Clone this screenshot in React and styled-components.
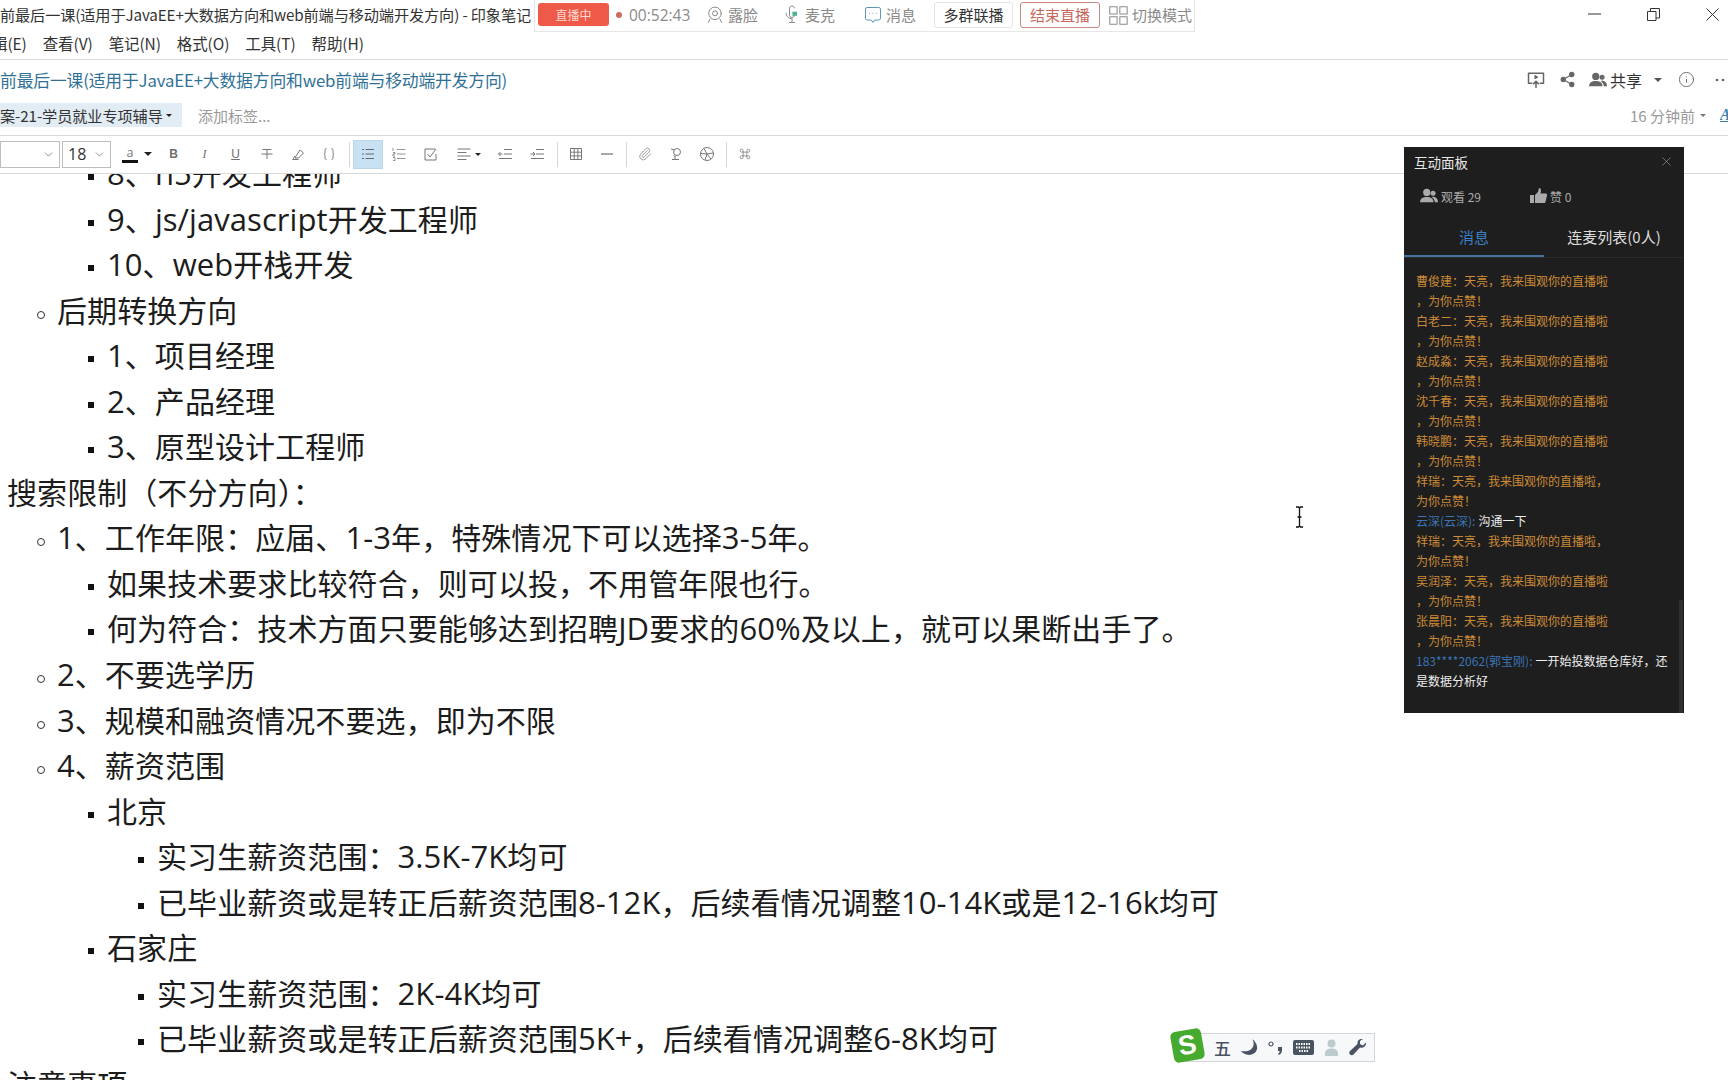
import React from 'react';
import styled, { createGlobalStyle } from 'styled-components';
import { Info, Share2, ChevronDown, X, Paperclip } from 'lucide-react';

const CJK = '"Noto Sans CJK SC", "Noto Sans", sans-serif';
const Global = createGlobalStyle`
  html, body { margin: 0; padding: 0; background: #fff; overflow: hidden; }
  body { font-family: ${CJK}; color: #222; }
`;

const Page = styled.div`
  position: relative; width: 1728px; height: 1080px; overflow: hidden; display: flex; flex-direction: column; background: #fff;
`;
const TitleBar = styled.div`display: flex; align-items: flex-start; height: 30px; white-space: nowrap; flex: none;`;
const WinTitle = styled.div`font-size: 15.2px; line-height: 29px; color: #333; width: 534px; flex: none; letter-spacing: -0.13px; overflow: hidden;`;
const LiveBar = styled.div`
  flex: none; width: 661px; height: 32px; box-sizing: border-box; border: 1px solid #e6e6e6; border-top: 0; background: #fff;
  display: flex; align-items: center; padding: 0 0 2px 3px; font-size: 15px; color: #8a8a8a; position: relative; z-index: 2;
`;
const LiveBadge = styled.div`width: 71px; height: 23px; border-radius: 3px; background: #ee5a47; color: #ffd9d2; font-size: 12px; display: flex; align-items: center; justify-content: center;`;
const Dot = styled.span`width: 6px; height: 6px; border-radius: 50%; background: #cf6a62; margin: 0 7px 0 7px;`;
const Time = styled.span`font-family: "Open Sans", sans-serif; font-size: 15.5px; width: 68px; color: #8a8a8a;`;
const LiveItem = styled.span`display: flex; align-items: center; gap: 3px; margin-left: ${p => p.$ml}px;`;
const LiveBtn = styled.div`
  height: 26px; width: ${p => p.$w}px; box-sizing: border-box; border-radius: 3px; border: 1px solid ${p => p.$danger ? '#c98a82' : '#e4e4e4'};
  color: ${p => p.$danger ? '#c8675c' : '#333'}; display: flex; align-items: center; justify-content: center; margin-left: ${p => p.$ml}px; font-size: 15px;
`;
const WinControls = styled.div`margin-left: auto; display: flex; align-items: center; height: 28px; color: #333;`;
const WinBtn = styled.span`width: 58px; display: flex; justify-content: center; &:last-child { width: 32px; margin-left: 14px; }`;

const MenuBar = styled.div`
  height: 30px; display: flex; gap: 16px; align-items: center; padding-bottom: 3px; box-sizing: border-box; border-bottom: 1px solid #d8d8d8; font-size: 15.5px; letter-spacing: -0.1px; color: #333; overflow: hidden; flex: none;
`;
const MenuFirst = styled.span`margin-left: -8px;`;

const NoteHead = styled.div`height: 41px; box-sizing: border-box; padding-bottom: 2px; flex: none; display: flex; align-items: center; font-size: 16.8px; color: #2f7196; white-space: nowrap; letter-spacing: -0.15px;`;
const HeadTools = styled.div`margin-left: auto; display: flex; align-items: center; color: #666; font-size: 16px; letter-spacing: 0; padding-right: 2px;`;
const HeadTool = styled.span`display: flex; align-items: center; gap: 3px; margin-left: ${p => p.$ml || 0}px; color: ${p => p.$dark ? '#333' : '#666'};`;
const Caret = styled.span`
  display: inline-block; width: 0; height: 0; border-left: ${p => p.$s || 4}px solid transparent; border-right: ${p => p.$s || 4}px solid transparent;
  border-top: ${p => p.$s || 4}px solid ${p => p.$c || '#555'}; margin-left: ${p => p.$ml || 0}px;
`;
const TagRow = styled.div`height: 35px; flex: none; box-sizing: border-box; padding-bottom: 6px; display: flex; align-items: center; border-bottom: 1px solid #d8d8d8; font-size: 15px; white-space: nowrap;`;
const TagChip = styled.div`height: 24px; width: 182px; background: #e2ecf4; display: flex; align-items: center; color: #333; font-size: 15.2px; gap: 3px; letter-spacing: -0.1px;`;
const TagHint = styled.div`margin-left: 16px; color: #999;`;
const Updated = styled.div`margin-left: auto; display: flex; align-items: center; color: #999; font-size: 15px;`;
const FontA = styled.span`margin-left: 14px; width: 8px; overflow: hidden; color: #3f7fb0; font-style: italic; font-weight: 700; font-family: "Liberation Serif", serif; text-decoration: underline; font-size: 16px;`;

const ToolBar = styled.div`height: 38px; box-sizing: border-box; padding-bottom: 1px; display: flex; align-items: center; border-bottom: 1px solid #d8d8d8; color: #777; flex: none;`;
const Select = styled.div`
  box-sizing: border-box; height: 27px; width: ${p => p.$w}px; border: 1px solid #bdbdbd; margin-left: ${p => p.$ml || 0}px;
  display: flex; align-items: center; justify-content: space-between; padding: 0 4px 0 5px; font-size: 16px; color: #333; font-family: "Open Sans", sans-serif;
`;
const ColorBtn = styled.div`width: 47px; height: 30px; display: flex; align-items: center; padding-left: 11px; box-sizing: border-box; gap: 6px;`;
const ColorA = styled.span`font-size: 12.5px; line-height: 15px; color: #777; border-bottom: 3px solid #111; width: 16px; text-align: center; font-family: "Open Sans", sans-serif;`;
const Tool = styled.span`
  width: ${p => p.$w || 31}px; height: 29px; flex: none; display: flex; align-items: center; justify-content: center; box-sizing: border-box;
  color: #777; background: ${p => p.$active ? '#c9e2f3' : 'transparent'};
  box-shadow: ${p => p.$active ? 'inset 0 0 0 1px #bcd6ea' : 'none'};
`;
const Letter = styled.span`
  font: ${p => p.$i ? 'italic' : 'normal'} ${p => p.$b ? 700 : 400} 12px ${p => p.$i ? '"Liberation Serif", serif' : '"Liberation Sans", sans-serif'};
  color: #6f6f6f; text-decoration: ${p => p.$u ? 'underline' : 'none'};
`;
const Sep = styled.span`width: 1px; height: 25px; background: #d6d6d6; flex: none; margin: 0 ${p => p.$r || 3}px 0 ${p => p.$l || 5}px;`;

const Content = styled.div`flex: 1; min-height: 0; overflow: hidden;`;
const Lines = styled.div`margin-top: -24px;`;
const Line = styled.div`
  position: relative; height: 45.55px; line-height: 45.55px; white-space: nowrap; color: #1c1c1c; font-size: 30px; letter-spacing: 0.07px;
  font-family: ${CJK};
  padding-left: ${p => [7, 57, 107, 157][p.$level]}px;
  ${p => p.$level >= 2 && `&::before { content: ''; position: absolute; left: ${p.$level === 2 ? 88 : 138}px; top: 24px; width: 6px; height: 6px; background: #111; }`}
  ${p => p.$level === 1 && `&::before { content: ''; position: absolute; left: 37px; top: 24px; width: 6px; height: 6px; border: 1px solid #333; border-radius: 50%; }`}
`;
const Latin = styled.span`font-family: "Open Sans", sans-serif; font-size: 31px;`;

const Panel = styled.aside`
  position: absolute; left: 1404px; top: 147px; width: 280px; height: 566px; background: #1e1e1e; color: #ddd; z-index: 3; display: flex; flex-direction: column;
`;
const PanelHead = styled.div`height: 29px; flex: none; display: flex; align-items: center; justify-content: space-between; padding: 0 10px; font-size: 13.5px; color: #e8e8e8;`;
const Stats = styled.div`height: 36px; margin-top: 2px; flex: none; display: flex; align-items: center; padding-left: 16px; font-size: 12px; color: #aaa;`;
const Stat = styled.span`display: flex; align-items: center; gap: 3px; width: ${p => p.$w}px;`;
const Tabs = styled.div`height: 43px; flex: none; display: flex; border-bottom: 1px solid #2b2b2b;`;
const TabItem = styled.div`
  width: 140px; display: flex; align-items: center; justify-content: center; font-size: 15px; box-sizing: border-box; padding-top: 3px;
  color: ${p => p.$on ? '#3e7fc4' : '#dcdcdc'}; border-bottom: 2px solid ${p => p.$on ? '#45729f' : 'transparent'}; height: 43px;
`;
const Msgs = styled.div`padding: 13px 0 0 12px; font-size: 12px; line-height: 20px; white-space: nowrap;`;
const Orange = styled.div`color: #cc8b37;`;
const Blue = styled.span`color: #3b74b4;`;
const White = styled.span`color: #eee; margin-left: 3px;`;
const Thumb = styled.div`position: absolute; right: 1px; bottom: 0; width: 4px; height: 113px; background: #303030;`;

const Ime = styled.div`
  position: absolute; left: 1182px; top: 1033px; width: 193px; height: 29px; background: #f7f8fa; border: 1px solid #d3d6dc; box-sizing: border-box;
  display: flex; align-items: center; padding-left: 31px; gap: 10px; color: #4a5361; z-index: 3;
`;
const ImeLogo = styled.div`
  position: absolute; left: -11px; top: -4px; width: 31px; height: 31px; border-radius: 5px; background: #45aa2e; transform: rotate(-10deg);
  color: #fff; font: 700 27px/30px "Liberation Sans", sans-serif; text-align: center;
`;
const ImeText = styled.span`font-size: 17px; font-weight: 500; line-height: 1; color: #4a5361; width: 17px;`;
const Cursor = styled.div`position: absolute; left: 1295px; top: 506px; color: #111; z-index: 2; line-height: 0;`;

const rows = [
  [2, '8、h5开发工程师'], [2, '9、js/javascript开发工程师'], [2, '10、web开栈开发'],
  [1, '后期转换方向'], [2, '1、项目经理'], [2, '2、产品经理'], [2, '3、原型设计工程师'],
  [0, '搜索限制（不分方向）：'],
  [1, '1、工作年限：应届、1-3年，特殊情况下可以选择3-5年。'],
  [2, '如果技术要求比较符合，则可以投，不用管年限也行。'],
  [2, '何为符合：技术方面只要能够达到招聘JD要求的60%及以上，就可以果断出手了。'],
  [1, '2、不要选学历'], [1, '3、规模和融资情况不要选，即为不限'], [1, '4、薪资范围'],
  [2, '北京'], [3, '实习生薪资范围：3.5K-7K均可'],
  [3, '已毕业薪资或是转正后薪资范围8-12K，后续看情况调整10-14K或是12-16k均可'],
  [2, '石家庄'], [3, '实习生薪资范围：2K-4K均可'],
  [3, '已毕业薪资或是转正后薪资范围5K+，后续看情况调整6-8K均可'],
  [0, '注意事项'],
];
const cheer = n => `${n}：天亮，我来围观你的直播啦`;
const withLatin = text => text.split(/([\x21-\x7e]+)/).map((s, i) => (i % 2 ? <Latin key={i}>{s}</Latin> : s));

const Stroke = ({ size = 18, w = 1.2, children, color = 'currentColor', vb = 24 }) => (
  <svg width={size} height={size} viewBox={`0 0 ${vb} ${vb}`} fill="none" stroke={color} strokeWidth={w} strokeLinecap="round" strokeLinejoin="round">{children}</svg>
);
const Ico = ({ children, size = 16 }) => (
  <svg width={size} height={size} viewBox="0 0 16 16" fill="none" stroke="#777" strokeWidth="1">{children}</svg>
);
const People = ({ size = 18, color = '#777' }) => (
  <svg width={size} height={size} viewBox="0 0 20 20" fill={color}>
    <circle cx="7.5" cy="6" r="4" /><path d="M0 17c0-4 3-6 7.500-6S15 13 15 17z" />
    <circle cx="14.500" cy="7" r="2.800" /><path d="M13 11c3.500-.5 7 1 7 6h-3.500c0-2-1.500-4.500-3.500-6z" />
  </svg>
);

export default function App() {
  return (
    <Page>
      <Global />
      <TitleBar>
        <WinTitle>前最后一课(适用于JavaEE+大数据方向和web前端与移动端开发方向) - 印象笔记</WinTitle>
        <LiveBar>
          <LiveBadge>直播中</LiveBadge>
          <Dot />
          <Time>00:52:43</Time>
          <LiveItem $ml={8}>
            <Stroke size={20}><circle cx="12" cy="10" r="7.500" /><circle cx="12" cy="10" r="3" /><path d="M6 17l-2 4M18 17l2 4" /></Stroke>
            露脸
          </LiveItem>
          <LiveItem $ml={24}>
            <Stroke size={20}><path d="M15 3.500A3 3 0 0 0 9 5v7a3 3 0 0 0 6 0" /><path d="M5 10c0 4 3 6.500 7 6.500M12 17v4M9 21h6" /><path d="M12.500 8h5.500v5h-5.500z" fill="#4fb58a" stroke="none" /></Stroke>
            麦克
          </LiveItem>
          <LiveItem $ml={28}>
            <Stroke size={20} color="#5f98b4"><path d="M5 3h14a2 2 0 0 1 2 2v11a2 2 0 0 1-2 2h-5l-2 3-2-3H5a2 2 0 0 1-2-2V5a2 2 0 0 1 2-2z" /><path d="M8 10h.01M12 10h.01M16 10h.01" /></Stroke>
            消息
          </LiveItem>
          <LiveBtn $w={79} $ml={18}>多群联播</LiveBtn>
          <LiveBtn $w={80} $ml={7} $danger>结束直播</LiveBtn>
          <LiveItem $ml={7}>
            <Stroke size={22} w={1.1}><rect x="3" y="3" width="8" height="8" /><rect x="14" y="3" width="8" height="8" /><rect x="3" y="14" width="8" height="8" /><rect x="14" y="14" width="8" height="8" /></Stroke>
            切换模式
          </LiveItem>
        </LiveBar>
        <WinControls>
          <WinBtn><svg width="14" height="2"><path d="M0 1h13" stroke="#333" /></svg></WinBtn>
          <WinBtn><svg width="13" height="13" fill="none" stroke="#333"><path d="M.5 3.500h8.500v9H.5zM3.500 3V.5H12.500V10H9" /></svg></WinBtn>
          <WinBtn><svg width="13" height="13" stroke="#333"><path d="M.5.5l12 12M12.500.5l-12 12" /></svg></WinBtn>
        </WinControls>
      </TitleBar>

      <MenuBar>
        <MenuFirst>辑(E)</MenuFirst>
        <span>查看(V)</span><span>笔记(N)</span><span>格式(O)</span><span>工具(T)</span><span>帮助(H)</span>
      </MenuBar>

      <NoteHead>
        前最后一课(适用于JavaEE+大数据方向和web前端与移动端开发方向)
        <HeadTools>
          <HeadTool>
            <Stroke size={20} w={1.8}><path d="M7 16H3V4h18v12h-4" /><path d="M12 21v-7M9 16.500l3-3 3 3" fill="#666" /><path d="M11 7l2.500 1.500L11 10z" /></Stroke>
          </HeadTool>
          <HeadTool $ml={13}><Share2 size={17} fill="#666" strokeWidth={1.6} /></HeadTool>
          <HeadTool $ml={13} $dark><People size={18} color="#666" />共享<Caret $ml={9} $s={4} /></HeadTool>
          <HeadTool $ml={16}><Info size={17} strokeWidth={1.3} /></HeadTool>
          <HeadTool $ml={20}>
            <svg width="11" height="4" fill="#666"><circle cx="2" cy="2" r="1.300" /><circle cx="8" cy="2" r="1.300" /></svg>
          </HeadTool>
        </HeadTools>
      </NoteHead>

      <TagRow>
        <TagChip>案-21-学员就业专项辅导<Caret $s={3} $c="#222" /></TagChip>
        <TagHint>添加标签...</TagHint>
        <Updated>
          <span>16 分钟前</span><Caret $ml={5} $s={3} $c="#777" /><FontA>A</FontA>
        </Updated>
      </TagRow>

      <ToolBar>
        <Select $w={60}><span /><ChevronDown size={13} strokeWidth={1} /></Select>
        <Select $w={49} $ml={2}>18<ChevronDown size={13} strokeWidth={1} /></Select>
        <ColorBtn><ColorA>a</ColorA><Caret $s={4} $c="#222" /></ColorBtn>
        <Tool><Letter $b>B</Letter></Tool>
        <Tool><Letter $i>I</Letter></Tool>
        <Tool><Letter $u>U</Letter></Tool>
        <Tool><Ico><path d="M3.500 3.500h9M8 3.500V13M2.500 8h11" /></Ico></Tool>
        <Tool><Ico><path d="M6 10l4-6 3.500 3-5 5H5zM2.500 13.500h6M5 10l-2 3" /></Ico></Tool>
        <Tool><Ico><path d="M5.500 2.500C4 2.500 4 3.500 4 5.500S3.500 8 3 8c.5 0 1 .5 1 2.500s0 3 1.500 3M10.500 2.500c1.500 0 1.500 1 1.500 3s.5 2.500 1 2.500c-.5 0-1 .5-1 2.500s0 3-1.500 3" /></Ico></Tool>
        <Sep $l={5} $r={3} />
        <Tool $w={30} $active><Ico><path d="M5.500 3.500h8.500M5.500 8h8.500M5.500 12.500h8.500M2 3.500h2M2 8h2M2 12.500h2" stroke="#667" /></Ico></Tool>
        <Tool $w={31}><Ico><path d="M6 3.500h8.500M6 8h8.500M6 12.500h8.500M2 2v3M2 6.500h2v1.500H2v2h2M2 11.500h2v3H2" strokeWidth=".8" /></Ico></Tool>
        <Tool $w={33}><Ico><path d="M2 3h10M2 3v11h11V8M4.500 8l2.500 3 6-8" /></Ico></Tool>
        <Tool $w={42}><Ico><path d="M1.500 3h13M1.500 6.500h9M1.500 10h13M1.500 13.500h9" /></Ico><Caret $s={3.5} $ml={3} $c="#222" /></Tool>
        <Tool $w={32}><Ico><path d="M7 3.500h8M7 8h8M2 12.500h13M5.500 8H1.500M3.500 6L1.500 8l2 2" /></Ico></Tool>
        <Tool $w={32}><Ico><path d="M7 3.500h8M7 8h8M2 12.500h13M1.500 8h4.500M4 6l2 2-2 2" /></Ico></Tool>
        <Sep $l={4} $r={2} />
        <Tool><Ico><path d="M2.500 2.500h11v11h-11zM2.500 6.200h11M2.500 9.900h11M6.200 2.500v11M9.900 2.500v11" /></Ico></Tool>
        <Tool><Ico><path d="M2 8h12" strokeWidth="1.300" /></Ico></Tool>
        <Sep $l={4} $r={2} />
        <Tool><Paperclip size={14} strokeWidth={1.2} /></Tool>
        <Tool><Ico><circle cx="9" cy="6" r="3.500" /><path d="M3 3l3.500 1M7 9.500V13M4 13.500h7M5.500 9.500c.5.700 1 1 1.500 1" /></Ico></Tool>
        <Tool><Ico><circle cx="8" cy="8" r="6.500" /><path d="M8 8L5 2.500M8 8l6-1M8 8l-2 6M8 8l-6.300-.5M8 8l4 5" /></Ico></Tool>
        <Sep $l={4} $r={2} />
        <Tool><Ico size={12}><path d="M5.500 5.500h5v5h-5zM5.500 5.500h-2a2 2 0 1 1 2-2zM10.500 5.500v-2a2 2 0 1 1 2 2zM10.500 10.500h2a2 2 0 1 1-2 2zM5.500 10.500v2a2 2 0 1 1-2-2z" /></Ico></Tool>
      </ToolBar>

      <Content>
        <Lines>
          {rows.map(([level, text], i) => <Line key={i} $level={level}>{withLatin(text)}</Line>)}
        </Lines>
      </Content>

      <Panel>
        <PanelHead>互动面板<X size={15} strokeWidth={1} color="#a0a0a0" /></PanelHead>
        <Stats>
          <Stat $w={110}><People size={18} color="#aaa" />观看 29</Stat>
          <Stat>
            <svg width="17" height="16" viewBox="0 0 17 16" fill="#aaa"><path d="M0 7h4v8H0zM5 7l3-3 1-4c2 0 2.500 2 1.500 5.500H16c1 0 1 1 1 2l-1.500 6.500c-.3 1-1 1-2 1H5z" /></svg>
            赞 0
          </Stat>
        </Stats>
        <Tabs>
          <TabItem $on>消息</TabItem>
          <TabItem>连麦列表(0人)</TabItem>
        </Tabs>
        <Msgs>
          {['曹俊建', '白老二', '赵成淼', '沈千春', '韩晓鹏'].map(n => (
            <Orange key={n}>{cheer(n)}<br />，为你点赞！</Orange>
          ))}
          <Orange>祥瑞：天亮，我来围观你的直播啦，<br />为你点赞！</Orange>
          <div><Blue>云深(云深):</Blue><White>沟通一下</White></div>
          <Orange>祥瑞：天亮，我来围观你的直播啦，<br />为你点赞！</Orange>
          {['吴润泽', '张晨阳'].map(n => (
            <Orange key={n}>{cheer(n)}<br />，为你点赞！</Orange>
          ))}
          <div><Blue>183****2062(郭宝刚):</Blue><White>一开始投数据仓库好，还<br />是数据分析好</White></div>
        </Msgs>
        <Thumb />
      </Panel>

      <Ime>
        <ImeLogo>S</ImeLogo>
        <ImeText>五</ImeText>
        <svg width="17" height="17" viewBox="0 0 17 17" fill="#4a5361"><path d="M11 0c4 5 1 14-11 12 3 5 14 6 16-2 .7-4-2-8-5-10z" /></svg>
        <svg width="15" height="15" viewBox="0 0 15 15" fill="#4a5361"><circle cx="3" cy="4" r="2" fill="none" stroke="#4a5361" strokeWidth="1.200" /><path d="M10 7h4v3c0 2-1 4-3 5l-1-1c1-.6 1.500-1.500 1.600-3H10z" /></svg>
        <svg width="21" height="15" viewBox="0 0 21 15"><rect width="21" height="15" rx="2" fill="#4a5361" /><path d="M3 4h15M3 7.500h15M6 11h9" stroke="#fff" strokeWidth="2" strokeDasharray="1.500 1" /></svg>
        <svg width="15" height="17" viewBox="0 0 15 17" fill="#bccbcb"><circle cx="7.500" cy="4.500" r="4" /><path d="M1 17c-1-6 3-7.500 6.500-7.500S15 11 14 17z" /></svg>
        <svg width="17" height="17" viewBox="0 0 17 17" fill="#4a5361"><path d="M17 3.500l-3 3-3-1.500V2l3-2c-3-.5-6 1-5.500 5L1 12c-1 1-1 2.500 0 3.500s2.500 1 3.500 0L11 8.500c4 1 6.500-2 6-5z" /></svg>
      </Ime>
      <Cursor>
        <svg width="9" height="22" viewBox="0 0 9 22" fill="none" stroke="#111" strokeWidth="1.300"><path d="M1 1h2.500L4.500 2l1-1H8M4.500 2v18M1 21h2.500l1-1 1 1H8M2.500 11h4" /></svg>
      </Cursor>
    </Page>
  );
}
